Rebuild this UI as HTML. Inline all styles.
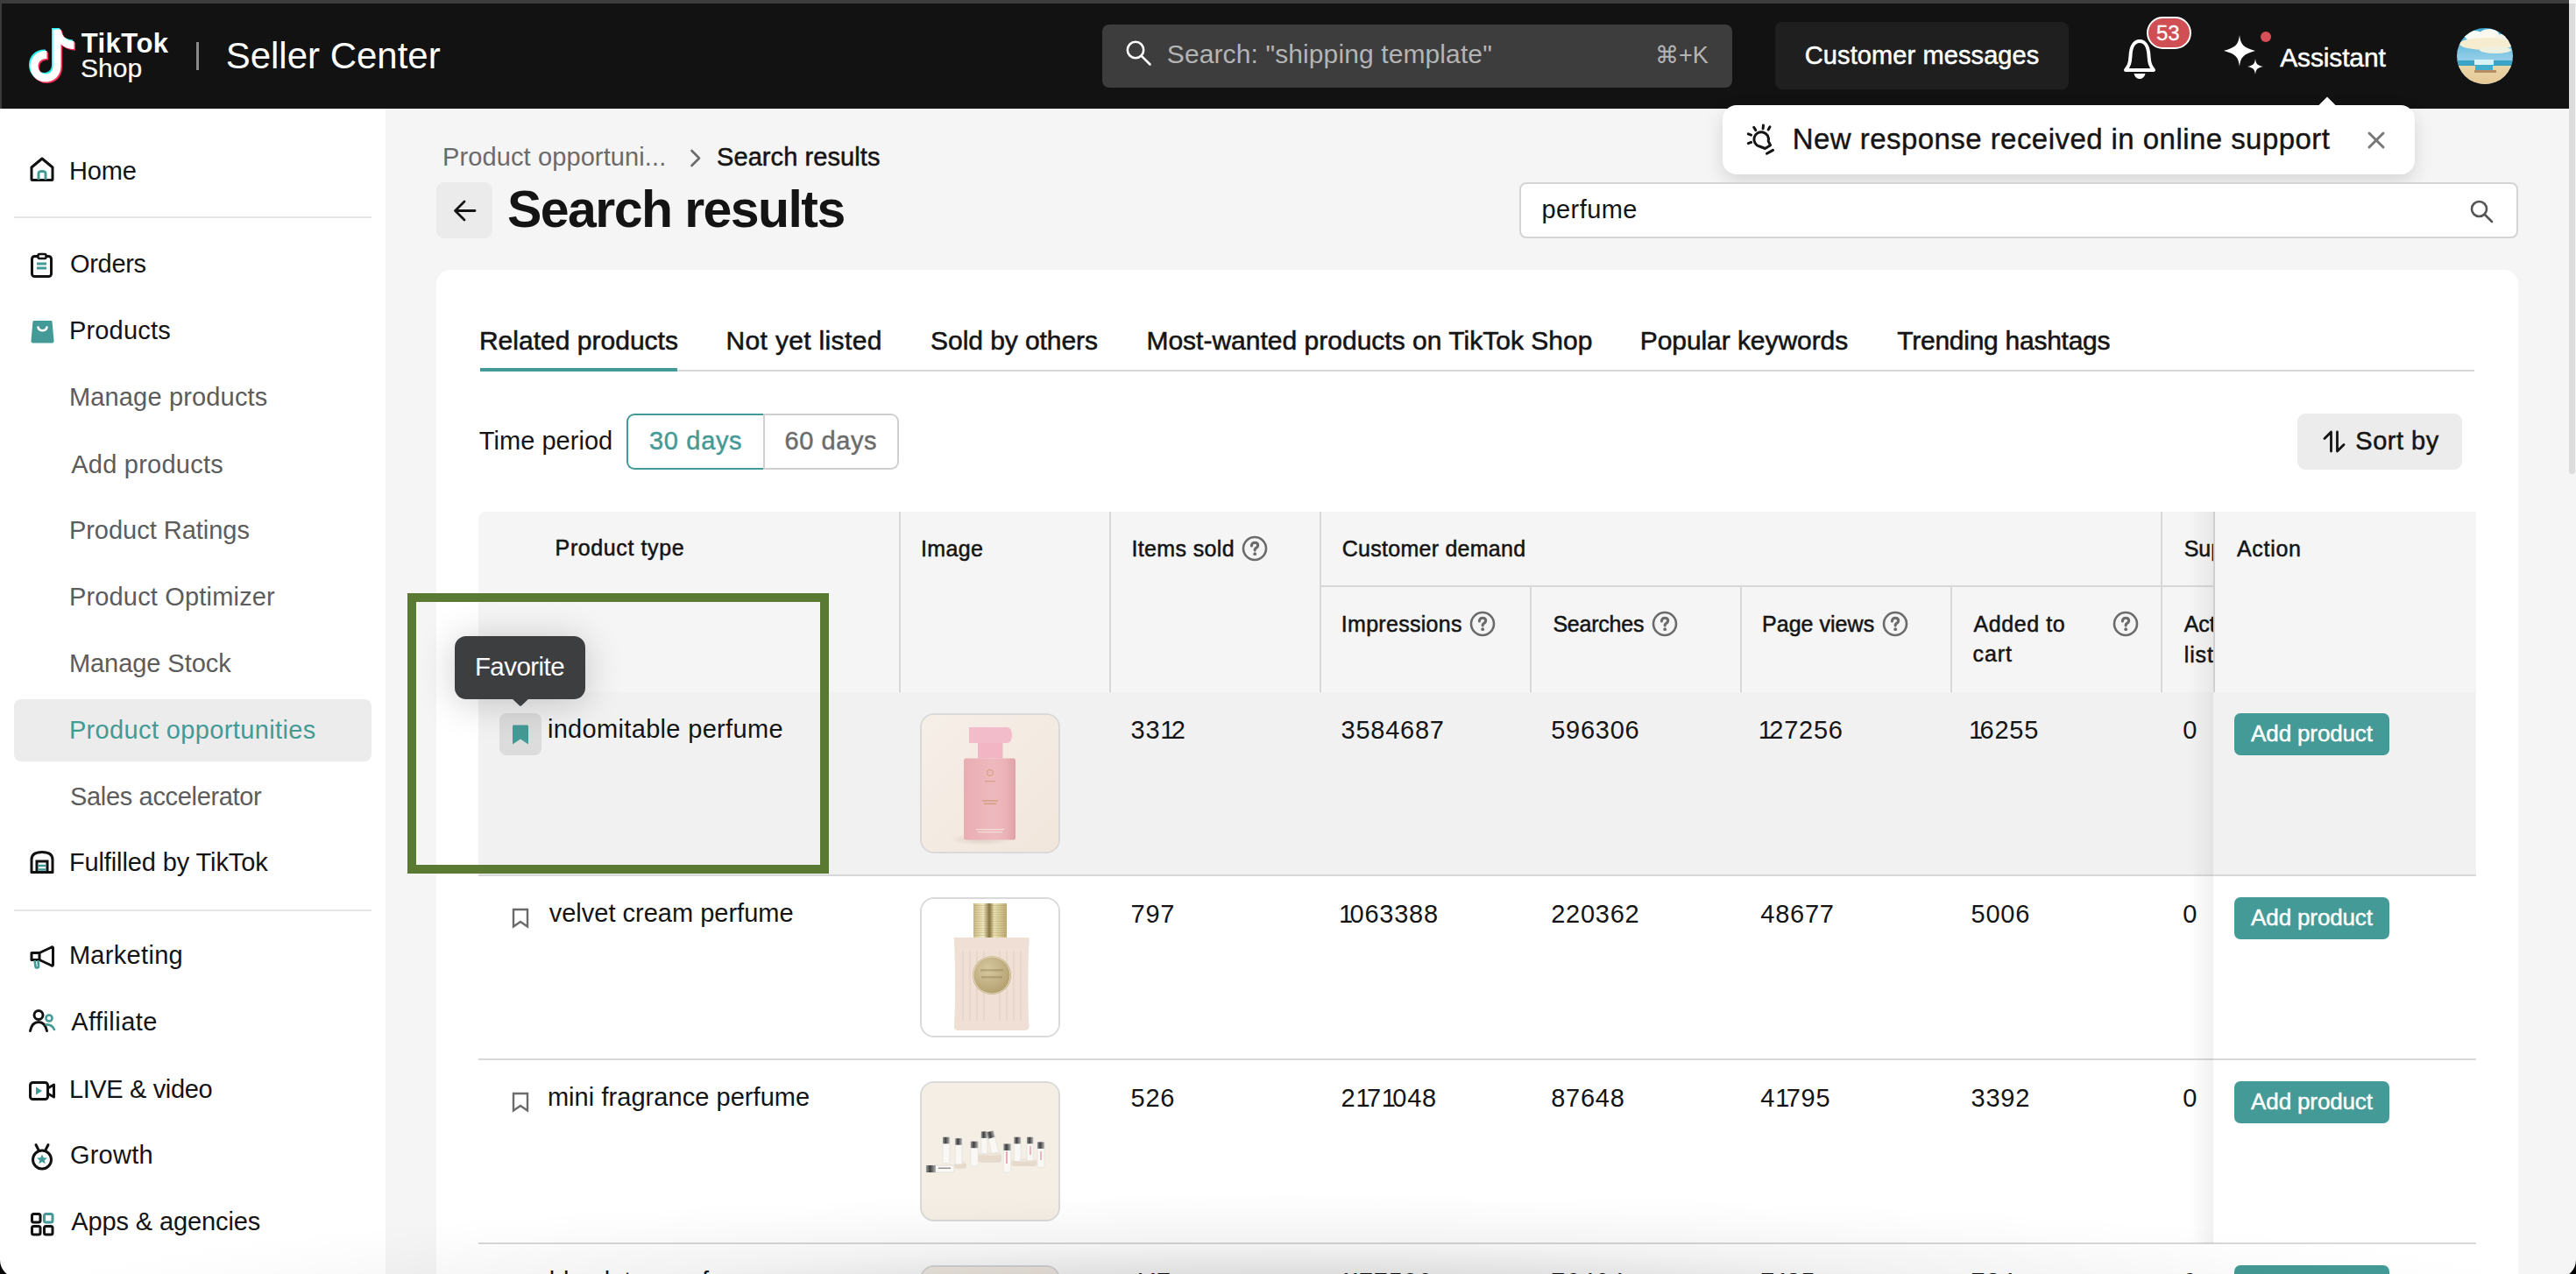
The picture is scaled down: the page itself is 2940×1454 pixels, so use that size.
<!DOCTYPE html>
<html><head><meta charset="utf-8"><title>Seller Center</title>
<style>
html,body{margin:0;padding:0;width:2940px;height:1454px;overflow:hidden;background:#f5f5f5;}
body{position:relative;font-family:"Liberation Sans",sans-serif;}
.t{position:absolute;line-height:0;white-space:nowrap;}
svg{overflow:visible}
</style></head><body>
<div style="position:absolute;left:0px;top:0px;width:2940px;height:4px;background:#3c3c3c"></div><div style="position:absolute;left:0px;top:4px;width:2932px;height:120px;background:#121212"></div><div style="position:absolute;left:0px;top:4px;width:2px;height:120px;background:#3a3a3a"></div><div style="position:absolute;left:0px;top:124px;width:440px;height:1330px;background:#ffffff"></div><div style="position:absolute;left:440px;top:124px;width:2492px;height:1330px;background:#f5f5f5"></div><div style="position:absolute;left:2932px;top:0px;width:8px;height:1454px;background:#f5f5f5"></div><div style="position:absolute;left:2932px;top:4px;width:7px;height:537px;background:#dcdcdc;border-radius:0 0 4px 4px"></div><div style="position:absolute;left:1258px;top:28px;width:719px;height:72px;background:#3d3d3d;border-radius:8px"></div><svg style="position:absolute;left:1285px;top:46px;" width="30" height="30" viewBox="0 0 30 30"><circle cx="11" cy="11" r="9.2" fill="none" stroke="#fff" stroke-width="2.6"/><line x1="17.8" y1="17.8" x2="27.5" y2="27.5" stroke="#fff" stroke-width="2.6" stroke-linecap="round"/></svg><div class="t" style="left:1331.8px;top:62.3px;font-size:30px;color:#b4b4b4;letter-spacing:0.108px;">Search: &quot;shipping template&quot;</div><div class="t" style="left:1889.0px;top:63.3px;font-size:27px;color:#b4b4b4;">⌘+K</div><div style="position:absolute;left:2026px;top:25px;width:335px;height:77px;background:#1f1f1f;border-radius:8px"></div><div class="t" style="left:2059.8px;top:63.3px;font-size:29px;color:#ffffff;-webkit-text-stroke:0.5px #ffffff;letter-spacing:0.1px;">Customer messages</div><svg style="position:absolute;left:2420px;top:44px;" width="44" height="48" viewBox="0 0 44 48"><path d="M6 36 C10 31 11 28 11.5 20 C12 9 16 3 22 3 C28 3 32 9 32.5 20 C33 28 34 31 38 36 Z" fill="none" stroke="#fff" stroke-width="4" stroke-linejoin="round"/><path d="M15.5 40 L28.5 40 C27.5 44 25 46 22 46 C19 46 16.5 44 15.5 40 Z" fill="#fff"/></svg><div style="position:absolute;left:2450px;top:19px;width:51px;height:37px;background:#d04f55;border:2px solid #fff;border-radius:20px;box-sizing:border-box"></div><div class="t" style="left:2461.0px;top:37.6px;font-size:24px;color:#ffffff;-webkit-text-stroke:0.3px #ffffff;">53</div><svg style="position:absolute;left:2536px;top:38px;" width="50" height="50" viewBox="0 0 50 50"><path d="M20 2 C21.5 13 24 16 38 20 C24 24 21.5 27 20 38 C18.5 27 16 24 2 20 C16 16 18.5 13 20 2 Z" fill="#fff"/><path d="M38 29 C38.8 35 40 36.5 47 38 C40 39.5 38.8 41 38 47 C37.2 41 36 39.5 29 38 C36 36.5 37.2 35 38 29 Z" fill="#fff"/></svg><div style="position:absolute;left:2580px;top:36px;width:12px;height:12px;background:#d94f57;border-radius:50%"></div><div class="t" style="left:2602.2px;top:65.5px;font-size:30px;color:#ffffff;-webkit-text-stroke:0.5px #ffffff;letter-spacing:-0.138px;">Assistant</div><svg style="position:absolute;left:2804px;top:32px;" width="64" height="64" viewBox="0 0 64 64"><defs><clipPath id="av"><circle cx="32" cy="32" r="32"/></clipPath>
<linearGradient id="sky" x1="0" y1="0" x2="0" y2="1"><stop offset="0" stop-color="#3aa6d3"/><stop offset="0.5" stop-color="#8ccbe6"/><stop offset="1" stop-color="#b7e2f2"/></linearGradient>
<linearGradient id="sand" x1="0" y1="0" x2="0" y2="1"><stop offset="0" stop-color="#e9d6a8"/><stop offset="1" stop-color="#e6c996"/></linearGradient></defs>
<g clip-path="url(#av)"><rect width="64" height="64" fill="url(#sky)"/>
<ellipse cx="20" cy="9" rx="11" ry="6" fill="#f7fbf4"/><ellipse cx="37" cy="7" rx="11" ry="6" fill="#fbf8f0"/><ellipse cx="52" cy="12" rx="10" ry="5" fill="#f6f3e6"/>
<ellipse cx="34" cy="18" rx="31" ry="7" fill="#f6ecd0"/><ellipse cx="44" cy="25" rx="18" ry="4" fill="#eef0e0"/>
<rect y="37" width="64" height="6" fill="#3aa3c6"/>
<rect y="43" width="64" height="21" fill="url(#sand)"/>
<rect x="20" y="36" width="22" height="6" fill="#d9f2f6"/>
<rect x="21" y="42" width="20" height="6" fill="#43aecb"/>
<rect x="20" y="48" width="25" height="3" fill="#b98d63"/>
</g></svg><div class="t" style="left:257.7px;top:63.7px;font-size:42px;color:#ffffff;letter-spacing:-0.008px;">Seller Center</div><div style="position:absolute;left:224px;top:48px;width:3px;height:32px;background:#8a8a8a"></div><svg style="position:absolute;left:27.5px;top:28px;" width="60" height="68" viewBox="0 0 60 68">
<g transform="translate(2,2)">
<path d="M29 2 L38 2 C39 10 44 15 53 15.5 L53 24.5 C46 24.5 41.5 22 38 19 L38 44 C38 55 30 62 20.5 62 C10 62 3 54 3 44 C3 33.5 11 26 22 26.5 L22 35.5 C16 35 12 39 12 44 C12 49 16 53 20.5 53 C25.5 53 29 49.5 29 44 Z" fill="#25f4ee"/>
</g>
<g transform="translate(5,5)">
<path d="M29 2 L38 2 C39 10 44 15 53 15.5 L53 24.5 C46 24.5 41.5 22 38 19 L38 44 C38 55 30 62 20.5 62 C10 62 3 54 3 44 C3 33.5 11 26 22 26.5 L22 35.5 C16 35 12 39 12 44 C12 49 16 53 20.5 53 C25.5 53 29 49.5 29 44 Z" fill="#fe2c55"/>
</g>
<g transform="translate(3.5,3.5)">
<path d="M29 2 L38 2 C39 10 44 15 53 15.5 L53 24.5 C46 24.5 41.5 22 38 19 L38 44 C38 55 30 62 20.5 62 C10 62 3 54 3 44 C3 33.5 11 26 22 26.5 L22 35.5 C16 35 12 39 12 44 C12 49 16 53 20.5 53 C25.5 53 29 49.5 29 44 Z" fill="#ffffff"/>
</g></svg><div class="t" style="left:92.7px;top:50.1px;font-size:31px;color:#ffffff;letter-spacing:0.46px;font-weight:700">TikTok</div><div class="t" style="left:92.0px;top:77.5px;font-size:30px;color:#ffffff;-webkit-text-stroke:0.2px #ffffff;">Shop</div><div style="position:absolute;left:1966px;top:120px;width:790px;height:79px;background:#fff;border-radius:16px;box-shadow:0 8px 22px rgba(0,0,0,0.13)"></div><svg style="position:absolute;left:2646px;top:110px;" width="20" height="12" viewBox="0 0 20 12"><path d="M0 10.5 L10 0.5 L20 10.5 Z" fill="#fff"/></svg><svg style="position:absolute;left:1993px;top:141px;" width="32" height="37" viewBox="0 0 32 37"><g fill="none" stroke="#141414" stroke-width="3" stroke-linecap="round" stroke-linejoin="round">
<path d="M23.5 34.2 L30.5 30.4"/>
<path d="M15.05 26 A8.3 8.3 0 1 1 25.2 20.15 L27.6 24.8 L21.6 28.5 Z"/>
<path d="M8.7 4.3 L10.8 7.6"/><path d="M19.5 2 L19.1 5.8"/><path d="M27 3.8 L25.2 6.9"/><path d="M2.3 11.9 L5.6 13.1"/><path d="M2.3 22.6 L5.6 21.4"/>
</g></svg><div class="t" style="left:2045.8px;top:159.2px;font-size:33px;color:#141414;-webkit-text-stroke:0.4px #141414;letter-spacing:0.445px;">New response received in online support</div><svg style="position:absolute;left:2702px;top:150px;" width="20" height="20" viewBox="0 0 20 20"><path d="M2 2 L18 18 M18 2 L2 18" stroke="#777" stroke-width="3" stroke-linecap="round"/></svg><div style="position:absolute;left:16px;top:247px;width:408px;height:2px;background:#e6e6e6"></div><div style="position:absolute;left:16px;top:1038px;width:408px;height:2px;background:#e6e6e6"></div><div style="position:absolute;left:16px;top:798px;width:408px;height:71px;background:#ececec;border-radius:8px"></div><div class="t" style="left:78.9px;top:194.7px;font-size:29px;color:#141414;letter-spacing:-0.133px;">Home</div><div class="t" style="left:79.9px;top:301.2px;font-size:29px;color:#141414;letter-spacing:-0.28px;">Orders</div><div class="t" style="left:78.9px;top:377.4px;font-size:29px;color:#141414;letter-spacing:0.2px;">Products</div><div class="t" style="left:78.9px;top:452.8px;font-size:29px;color:#5c5c5c;letter-spacing:0.164px;">Manage products</div><div class="t" style="left:81.2px;top:529.5px;font-size:29px;color:#5c5c5c;letter-spacing:0.245px;">Add products</div><div class="t" style="left:78.9px;top:604.6px;font-size:29px;color:#5c5c5c;letter-spacing:-0.021px;">Product Ratings</div><div class="t" style="left:78.9px;top:680.6px;font-size:29px;color:#5c5c5c;letter-spacing:0.175px;">Product Optimizer</div><div class="t" style="left:78.9px;top:756.9px;font-size:29px;color:#5c5c5c;letter-spacing:-0.055px;">Manage Stock</div><div class="t" style="left:78.9px;top:832.8px;font-size:29px;color:#449a96;letter-spacing:0.365px;">Product opportunities</div><div class="t" style="left:80.0px;top:908.6px;font-size:29px;color:#5c5c5c;letter-spacing:-0.331px;">Sales accelerator</div><div class="t" style="left:78.9px;top:984.1px;font-size:29px;color:#141414;letter-spacing:-0.111px;">Fulfilled by TikTok</div><div class="t" style="left:78.9px;top:1090.1px;font-size:29px;color:#141414;letter-spacing:0.312px;">Marketing</div><div class="t" style="left:81.2px;top:1165.9px;font-size:29px;color:#141414;letter-spacing:0.45px;">Affiliate</div><div class="t" style="left:78.9px;top:1242.8px;font-size:29px;color:#141414;letter-spacing:-0.364px;">LIVE &amp; video</div><div class="t" style="left:79.9px;top:1318.4px;font-size:29px;color:#141414;letter-spacing:0.26px;">Growth</div><div class="t" style="left:81.2px;top:1394.3px;font-size:29px;color:#141414;letter-spacing:-0.107px;">Apps &amp; agencies</div><svg style="position:absolute;left:34px;top:179px;" width="28" height="28" viewBox="0 0 28 28"><path d="M2 12 L14 2 L26 12 L26 25.5 C26 26 25.5 26.5 25 26.5 L3 26.5 C2.5 26.5 2 26 2 25.5 Z" fill="none" stroke="#111" stroke-width="3" stroke-linejoin="round"/><path d="M10 26 L10 19 C10 17 11 16.5 14 16.5 C17 16.5 18 17 18 19 L18 26" fill="none" stroke="#449a96" stroke-width="3"/></svg><svg style="position:absolute;left:35px;top:289px;" width="26" height="28" viewBox="0 0 26 28"><rect x="1.5" y="3.5" width="22" height="23" rx="3" fill="none" stroke="#111" stroke-width="3"/><rect x="8.5" y="1" width="9" height="5" rx="1.5" fill="#fff" stroke="#111" stroke-width="2.5"/><path d="M7 12 L18 12 M7 17 L18 17" stroke="#449a96" stroke-width="2.8"/></svg><svg style="position:absolute;left:35px;top:365px;" width="27" height="27" viewBox="0 0 27 27"><path d="M4 1 L23 1 C24 1 24.5 1.5 24.6 2.5 L26.5 24 C26.6 25.5 25.8 26.5 24.5 26.5 L2.5 26.5 C1.2 26.5 0.4 25.5 0.5 24 L2.4 2.5 C2.5 1.5 3 1 4 1 Z" fill="#449a96"/><path d="M8.5 8.5 C9.5 13.5 17.5 13.5 18.5 8.5" fill="none" stroke="#fff" stroke-width="2.6" stroke-linecap="round"/></svg><svg style="position:absolute;left:34px;top:971px;" width="28" height="26" viewBox="0 0 28 26"><path d="M2 24.5 L2 10 C2 4 7 1.5 14 1.5 C21 1.5 26 4 26 10 L26 24.5 Z" fill="none" stroke="#111" stroke-width="3" stroke-linejoin="round"/><path d="M8 24.5 L8 12 L20 12 L20 24.5" fill="none" stroke="#111" stroke-width="3"/><path d="M9.5 17 L18.5 17 M9.5 21.5 L18.5 21.5" stroke="#449a96" stroke-width="2.6"/></svg><svg style="position:absolute;left:34px;top:1079px;" width="29" height="28" viewBox="0 0 29 28"><path d="M2 8.5 L11 8.5 L25 2 C26 1.6 26.5 2 26.5 3 L26.5 22 C26.5 23 26 23.4 25 23 L11 16.5 L2 16.5 Z" fill="none" stroke="#111" stroke-width="3" stroke-linejoin="round"/><path d="M11 8.5 L11 16.5" stroke="#111" stroke-width="3"/><path d="M5.5 17 L6.5 24 C6.8 26 10 26 10 24 L9.5 17" fill="none" stroke="#449a96" stroke-width="2.6"/></svg><svg style="position:absolute;left:33px;top:1152px;" width="31" height="26" viewBox="0 0 31 26"><circle cx="11" cy="6.5" r="5" fill="none" stroke="#111" stroke-width="3"/><path d="M1.5 24.5 C3 17 7 14.5 11 14.5 C15 14.5 19 17 20.5 24.5" fill="none" stroke="#111" stroke-width="3" stroke-linecap="round"/><circle cx="23" cy="10" r="3.5" fill="none" stroke="#449a96" stroke-width="2.6"/><path d="M19.5 17.5 C23.5 17 27 19 29 23" fill="none" stroke="#449a96" stroke-width="2.6" stroke-linecap="round"/></svg><svg style="position:absolute;left:33px;top:1234px;" width="31" height="22" viewBox="0 0 31 22"><rect x="1.5" y="1.5" width="20" height="19" rx="3" fill="none" stroke="#111" stroke-width="3"/><path d="M21.5 8 L28.5 4 L28.5 18 L21.5 14" fill="none" stroke="#111" stroke-width="3" stroke-linejoin="round"/><path d="M8 6.5 L15 11 L8 15.5 Z" fill="#449a96"/></svg><svg style="position:absolute;left:36px;top:1305px;" width="25" height="31" viewBox="0 0 25 31"><circle cx="12" cy="18.5" r="10.5" fill="none" stroke="#111" stroke-width="3"/><path d="M5 1.5 L8.5 8.5 M19 1.5 L15.5 8.5" stroke="#111" stroke-width="3" stroke-linecap="round"/><path d="M12 12.5 L13.8 16.3 L17.8 16.6 L14.8 19.2 L15.8 23.2 L12 21 L8.2 23.2 L9.2 19.2 L6.2 16.6 L10.2 16.3 Z" fill="#449a96"/></svg><svg style="position:absolute;left:35px;top:1384px;" width="27" height="27" viewBox="0 0 27 27"><rect x="1.5" y="1.5" width="9.5" height="9.5" rx="2" fill="none" stroke="#111" stroke-width="3"/><rect x="15.5" y="1.5" width="9.5" height="9.5" rx="2" fill="none" stroke="#449a96" stroke-width="3"/><rect x="1.5" y="15.5" width="9.5" height="9.5" rx="2" fill="none" stroke="#111" stroke-width="3"/><rect x="15.5" y="15.5" width="9.5" height="9.5" rx="2" fill="none" stroke="#111" stroke-width="3"/></svg><div class="t" style="left:505.1px;top:179.2px;font-size:29px;color:#6b6b6b;letter-spacing:0.105px;">Product opportuni...</div><svg style="position:absolute;left:787px;top:170px;" width="14" height="21" viewBox="0 0 14 21"><path d="M2.5 2 L11 10.5 L2.5 19" fill="none" stroke="#6b6b6b" stroke-width="2.6" stroke-linecap="round" stroke-linejoin="round"/></svg><div class="t" style="left:818.0px;top:179.2px;font-size:29px;color:#141414;-webkit-text-stroke:0.5px #141414;letter-spacing:0.085px;">Search results</div><div style="position:absolute;left:498px;top:208px;width:64px;height:64px;background:#ebebeb;border-radius:9px"></div><svg style="position:absolute;left:517px;top:227px;" width="27" height="27" viewBox="0 0 27 27"><path d="M25 13.5 L3 13.5 M13 3 L2.5 13.5 L13 24" fill="none" stroke="#141414" stroke-width="2.8" stroke-linecap="round" stroke-linejoin="round"/></svg><div class="t" style="left:579.1px;top:238.7px;font-size:59px;color:#141414;letter-spacing:-1.577px;font-weight:700">Search results</div><div style="position:absolute;left:1734px;top:208px;width:1140px;height:64px;background:#fff;border:2px solid #d2d4d6;border-radius:8px;box-sizing:border-box"></div><div class="t" style="left:1759.4px;top:238.7px;font-size:29px;color:#141414;letter-spacing:0.45px;">perfume</div><svg style="position:absolute;left:2819px;top:228px;" width="28" height="26" viewBox="0 0 28 26"><circle cx="10.5" cy="10.5" r="8.5" fill="none" stroke="#555" stroke-width="2.6"/><line x1="17" y1="17" x2="25" y2="25" stroke="#555" stroke-width="2.6" stroke-linecap="round"/></svg><div style="position:absolute;left:498px;top:308px;width:2376px;height:1200px;background:#fff;border-radius:16px"></div><div style="position:absolute;left:548px;top:422px;width:2276px;height:2px;background:#d8d8d8"></div><div style="position:absolute;left:548px;top:420px;width:225px;height:4px;background:#449a96"></div><div class="t" style="left:546.9px;top:388.8px;font-size:30px;color:#141414;-webkit-text-stroke:0.55px #141414;letter-spacing:0.017px;">Related products</div><div class="t" style="left:828.5px;top:388.8px;font-size:30px;color:#141414;-webkit-text-stroke:0.55px #141414;letter-spacing:0.342px;">Not yet listed</div><div class="t" style="left:1062.1px;top:388.8px;font-size:30px;color:#141414;-webkit-text-stroke:0.55px #141414;letter-spacing:-0.065px;">Sold by others</div><div class="t" style="left:1308.4px;top:388.8px;font-size:30px;color:#141414;-webkit-text-stroke:0.55px #141414;letter-spacing:0.01px;">Most-wanted products on TikTok Shop</div><div class="t" style="left:1871.7px;top:388.8px;font-size:30px;color:#141414;-webkit-text-stroke:0.55px #141414;letter-spacing:-0.063px;">Popular keywords</div><div class="t" style="left:2165.3px;top:388.8px;font-size:30px;color:#141414;-webkit-text-stroke:0.55px #141414;letter-spacing:-0.259px;">Trending hashtags</div><div class="t" style="left:546.8px;top:502.6px;font-size:29px;color:#141414;letter-spacing:0.04px;">Time period</div><div style="position:absolute;left:871px;top:472px;width:155px;height:64px;background:#fff;border:2px solid #cfcfcf;border-left:none;border-radius:0 9px 9px 0;box-sizing:border-box"></div><div style="position:absolute;left:871px;top:472px;width:2px;height:64px;background:#cfcfcf"></div><div style="position:absolute;left:715px;top:472px;width:156px;height:64px;background:#fff;border:2px solid #449a96;border-right:none;border-radius:9px 0 0 9px;box-sizing:border-box"></div><div class="t" style="left:741.0px;top:502.6px;font-size:29px;color:#449a96;-webkit-text-stroke:0.45px #449a96;letter-spacing:0.675px;">30 days</div><div class="t" style="left:895.5px;top:502.6px;font-size:29px;color:#6b6b6b;-webkit-text-stroke:0.45px #6b6b6b;letter-spacing:0.575px;">60 days</div><div style="position:absolute;left:2622px;top:472px;width:188px;height:64px;background:#ececec;border-radius:9px"></div><svg style="position:absolute;left:2650px;top:490px;" width="28" height="28" viewBox="0 0 28 28"><g fill="none" stroke="#141414" stroke-width="2.8" stroke-linecap="round" stroke-linejoin="round"><path d="M10.5 25 L10.5 3 L3 10.5"/><path d="M17.5 3 L17.5 25 L25 17.5"/></g></svg><div class="t" style="left:2688.3px;top:503.1px;font-size:29px;color:#141414;-webkit-text-stroke:0.5px #141414;letter-spacing:0.5px;">Sort by</div><div style="position:absolute;left:546px;top:583.7px;width:2280px;height:206.3px;background:#f5f5f5;border-radius:8px 0 0 0"></div><div style="position:absolute;left:546px;top:790px;width:2280px;height:208px;background:#f1f1f1"></div><div style="position:absolute;left:546px;top:998px;width:2280px;height:2px;background:#d7d8da"></div><div style="position:absolute;left:546px;top:1208px;width:2280px;height:2px;background:#d7d8da"></div><div style="position:absolute;left:546px;top:1418px;width:2280px;height:2px;background:#d7d8da"></div><div style="position:absolute;left:1026px;top:583.7px;width:2px;height:206.3px;background:#d7d8da"></div><div style="position:absolute;left:1265.5px;top:583.7px;width:2px;height:206.3px;background:#d7d8da"></div><div style="position:absolute;left:1506px;top:583.7px;width:2px;height:206.3px;background:#d7d8da"></div><div style="position:absolute;left:2466px;top:583.7px;width:2px;height:206.3px;background:#d7d8da"></div><div style="position:absolute;left:1746px;top:668px;width:2px;height:122px;background:#d7d8da"></div><div style="position:absolute;left:1986px;top:668px;width:2px;height:122px;background:#d7d8da"></div><div style="position:absolute;left:2226px;top:668px;width:2px;height:122px;background:#d7d8da"></div><div style="position:absolute;left:1506px;top:668px;width:1020px;height:2px;background:#d7d8da"></div><div class="t" style="left:633.6px;top:625.0px;font-size:25px;color:#141414;-webkit-text-stroke:0.5px #141414;letter-spacing:0.609px;">Product type</div><div class="t" style="left:1051.0px;top:625.5px;font-size:25px;color:#141414;-webkit-text-stroke:0.5px #141414;letter-spacing:0.35px;">Image</div><div class="t" style="left:1291.5px;top:625.5px;font-size:25px;color:#141414;-webkit-text-stroke:0.5px #141414;letter-spacing:0.356px;">Items sold</div><svg style="position:absolute;left:1417px;top:610.9px;" width="30" height="30" viewBox="0 0 30 30"><circle cx="15" cy="15" r="13" fill="none" stroke="#6b6b6b" stroke-width="2.6"/><path d="M11.4 11.9 C11.4 9.6 13.1 8.3 15.1 8.3 C17.2 8.3 18.7 9.6 18.7 11.5 C18.7 13.6 16.2 14.2 15.3 15.7 L15.2 16.9" fill="none" stroke="#6b6b6b" stroke-width="3.1" stroke-linecap="round"/><circle cx="15.2" cy="21.2" r="1.9" fill="#6b6b6b"/></svg><div class="t" style="left:1531.8px;top:625.5px;font-size:25px;color:#141414;-webkit-text-stroke:0.5px #141414;letter-spacing:0.257px;">Customer demand</div><div class="t" style="left:2492.7px;top:625.5px;font-size:25px;color:#141414;-webkit-text-stroke:0.5px #141414;">Supply</div><div class="t" style="left:1530.8px;top:711.9px;font-size:25px;color:#141414;-webkit-text-stroke:0.5px #141414;letter-spacing:0.29px;">Impressions</div><svg style="position:absolute;left:1677.2px;top:696.7px;" width="30" height="30" viewBox="0 0 30 30"><circle cx="15" cy="15" r="13" fill="none" stroke="#6b6b6b" stroke-width="2.6"/><path d="M11.4 11.9 C11.4 9.6 13.1 8.3 15.1 8.3 C17.2 8.3 18.7 9.6 18.7 11.5 C18.7 13.6 16.2 14.2 15.3 15.7 L15.2 16.9" fill="none" stroke="#6b6b6b" stroke-width="3.1" stroke-linecap="round"/><circle cx="15.2" cy="21.2" r="1.9" fill="#6b6b6b"/></svg><div class="t" style="left:1772.4px;top:711.9px;font-size:25px;color:#141414;-webkit-text-stroke:0.5px #141414;letter-spacing:-0.229px;">Searches</div><svg style="position:absolute;left:1885.2px;top:696.7px;" width="30" height="30" viewBox="0 0 30 30"><circle cx="15" cy="15" r="13" fill="none" stroke="#6b6b6b" stroke-width="2.6"/><path d="M11.4 11.9 C11.4 9.6 13.1 8.3 15.1 8.3 C17.2 8.3 18.7 9.6 18.7 11.5 C18.7 13.6 16.2 14.2 15.3 15.7 L15.2 16.9" fill="none" stroke="#6b6b6b" stroke-width="3.1" stroke-linecap="round"/><circle cx="15.2" cy="21.2" r="1.9" fill="#6b6b6b"/></svg><div class="t" style="left:2011.0px;top:711.9px;font-size:25px;color:#141414;-webkit-text-stroke:0.5px #141414;letter-spacing:0.033px;">Page views</div><svg style="position:absolute;left:2147.8px;top:696.7px;" width="30" height="30" viewBox="0 0 30 30"><circle cx="15" cy="15" r="13" fill="none" stroke="#6b6b6b" stroke-width="2.6"/><path d="M11.4 11.9 C11.4 9.6 13.1 8.3 15.1 8.3 C17.2 8.3 18.7 9.6 18.7 11.5 C18.7 13.6 16.2 14.2 15.3 15.7 L15.2 16.9" fill="none" stroke="#6b6b6b" stroke-width="3.1" stroke-linecap="round"/><circle cx="15.2" cy="21.2" r="1.9" fill="#6b6b6b"/></svg><div class="t" style="left:2252.6px;top:711.9px;font-size:25px;color:#141414;-webkit-text-stroke:0.5px #141414;letter-spacing:0.557px;">Added to</div><svg style="position:absolute;left:2410.8px;top:696.7px;" width="30" height="30" viewBox="0 0 30 30"><circle cx="15" cy="15" r="13" fill="none" stroke="#6b6b6b" stroke-width="2.6"/><path d="M11.4 11.9 C11.4 9.6 13.1 8.3 15.1 8.3 C17.2 8.3 18.7 9.6 18.7 11.5 C18.7 13.6 16.2 14.2 15.3 15.7 L15.2 16.9" fill="none" stroke="#6b6b6b" stroke-width="3.1" stroke-linecap="round"/><circle cx="15.2" cy="21.2" r="1.9" fill="#6b6b6b"/></svg><div class="t" style="left:2251.6px;top:746.4px;font-size:25px;color:#141414;-webkit-text-stroke:0.5px #141414;letter-spacing:0.867px;">cart</div><div class="t" style="left:2492.7px;top:711.9px;font-size:25px;color:#141414;-webkit-text-stroke:0.5px #141414;">Active</div><div class="t" style="left:2492.7px;top:746.8px;font-size:25px;color:#141414;-webkit-text-stroke:0.5px #141414;letter-spacing:0.9px;">listings</div><div class="t" style="left:624.9px;top:832.1px;font-size:29px;color:#141414;letter-spacing:0.328px;">indomitable perfume</div><div class="t" style="left:1290.5px;top:833.1px;font-size:29px;color:#141414;letter-spacing:0.75px">33<span style="letter-spacing:-3.6px">1</span>2</div><div class="t" style="left:1530.5px;top:833.1px;font-size:29px;color:#141414;letter-spacing:0.75px">3584687</div><div class="t" style="left:1770.2px;top:833.1px;font-size:29px;color:#141414;letter-spacing:0.75px">596306</div><div class="t" style="left:2006.8px;top:833.1px;font-size:29px;color:#141414;letter-spacing:0.75px"><span style="letter-spacing:-3.6px">1</span>27256</div><div class="t" style="left:2247.0px;top:833.1px;font-size:29px;color:#141414;letter-spacing:0.75px"><span style="letter-spacing:-3.6px">1</span>6255</div><div class="t" style="left:2491.2px;top:833.1px;font-size:29px;color:#141414;letter-spacing:0.75px">0</div><div style="position:absolute;left:570px;top:814px;width:48px;height:48px;background:#dcdcdc;border-radius:8px"></div><svg style="position:absolute;left:584px;top:826px;" width="20" height="24" viewBox="0 0 20 24"><path d="M2.5 1.5 L17.5 1.5 C18.3 1.5 19 2.2 19 3 L19 23.5 L10 17.5 L1 23.5 L1 3 C1 2.2 1.7 1.5 2.5 1.5 Z" fill="#449a96"/></svg><div class="t" style="left:626.7px;top:1042.1px;font-size:29px;color:#141414;letter-spacing:0.005px;">velvet cream perfume</div><div class="t" style="left:1290.5px;top:1043.1px;font-size:29px;color:#141414;letter-spacing:0.75px">797</div><div class="t" style="left:1528.0px;top:1043.1px;font-size:29px;color:#141414;letter-spacing:0.75px"><span style="letter-spacing:-3.6px">1</span>063388</div><div class="t" style="left:1770.2px;top:1043.1px;font-size:29px;color:#141414;letter-spacing:0.75px">220362</div><div class="t" style="left:2009.3px;top:1043.1px;font-size:29px;color:#141414;letter-spacing:0.75px">48677</div><div class="t" style="left:2249.5px;top:1043.1px;font-size:29px;color:#141414;letter-spacing:0.75px">5006</div><div class="t" style="left:2491.2px;top:1043.1px;font-size:29px;color:#141414;letter-spacing:0.75px">0</div><svg style="position:absolute;left:584px;top:1036px;" width="20" height="24" viewBox="0 0 20 24"><path d="M2 2 L18 2 L18 21.5 L10 16 L2 21.5 Z" fill="none" stroke="#6b6b6b" stroke-width="2.4" stroke-linejoin="miter"/></svg><div class="t" style="left:624.9px;top:1252.1px;font-size:29px;color:#141414;letter-spacing:0.052px;">mini fragrance perfume</div><div class="t" style="left:1290.5px;top:1253.1px;font-size:29px;color:#141414;letter-spacing:0.75px">526</div><div class="t" style="left:1530.5px;top:1253.1px;font-size:29px;color:#141414;letter-spacing:0.75px">2<span style="letter-spacing:-3.6px">1</span>7<span style="letter-spacing:-3.6px">1</span>048</div><div class="t" style="left:1770.2px;top:1253.1px;font-size:29px;color:#141414;letter-spacing:0.75px">87648</div><div class="t" style="left:2009.3px;top:1253.1px;font-size:29px;color:#141414;letter-spacing:0.75px">4<span style="letter-spacing:-3.6px">1</span>795</div><div class="t" style="left:2249.5px;top:1253.1px;font-size:29px;color:#141414;letter-spacing:0.75px">3392</div><div class="t" style="left:2491.2px;top:1253.1px;font-size:29px;color:#141414;letter-spacing:0.75px">0</div><svg style="position:absolute;left:584px;top:1246px;" width="20" height="24" viewBox="0 0 20 24"><path d="M2 2 L18 2 L18 21.5 L10 16 L2 21.5 Z" fill="none" stroke="#6b6b6b" stroke-width="2.4" stroke-linejoin="miter"/></svg><div class="t" style="left:626.8px;top:1462.1px;font-size:29px;color:#141414;">blue lotus perfume</div><div class="t" style="left:1290.5px;top:1463.1px;font-size:29px;color:#141414;letter-spacing:0.75px">4<span style="letter-spacing:-3.6px">1</span>7</div><div class="t" style="left:1528.0px;top:1463.1px;font-size:29px;color:#141414;letter-spacing:0.75px"><span style="letter-spacing:-3.6px">1</span><span style="letter-spacing:-3.6px">1</span>77590</div><div class="t" style="left:1770.2px;top:1463.1px;font-size:29px;color:#141414;letter-spacing:0.75px">76404</div><div class="t" style="left:2009.3px;top:1463.1px;font-size:29px;color:#141414;letter-spacing:0.75px">7<span style="letter-spacing:-3.6px">1</span>85</div><div class="t" style="left:2249.5px;top:1463.1px;font-size:29px;color:#141414;letter-spacing:0.75px">784</div><div class="t" style="left:2491.2px;top:1463.1px;font-size:29px;color:#141414;letter-spacing:0.75px">0</div><svg style="position:absolute;left:584px;top:1456px;" width="20" height="24" viewBox="0 0 20 24"><path d="M2 2 L18 2 L18 21.5 L10 16 L2 21.5 Z" fill="none" stroke="#6b6b6b" stroke-width="2.4" stroke-linejoin="miter"/></svg><div style="position:absolute;left:2498px;top:583.7px;width:28px;height:835.3px;background:linear-gradient(to right, rgba(0,0,0,0), rgba(0,0,0,0.055))"></div><div style="position:absolute;left:2526px;top:583.7px;width:300px;height:206.3px;background:#f5f5f5"></div><div style="position:absolute;left:2526px;top:583.7px;width:2px;height:206.3px;background:#cfcfcf"></div><div style="position:absolute;left:2526px;top:790px;width:300px;height:208px;background:#f1f1f1"></div><div style="position:absolute;left:2526px;top:999px;width:300px;height:419px;background:#fff"></div><div style="position:absolute;left:2526px;top:998px;width:300px;height:2px;background:#d7d8da"></div><div style="position:absolute;left:2526px;top:1208px;width:300px;height:2px;background:#d7d8da"></div><div style="position:absolute;left:2526px;top:1418px;width:300px;height:2px;background:#d7d8da"></div><div style="position:absolute;left:2526px;top:1420px;width:300px;height:40px;background:#fff"></div><div class="t" style="left:2553.0px;top:625.5px;font-size:25px;color:#141414;-webkit-text-stroke:0.5px #141414;letter-spacing:0.68px;">Action</div><div style="position:absolute;left:2550px;top:814px;width:177px;height:48px;background:#449a96;border-radius:7px"></div><div class="t" style="left:2569.1px;top:837.2px;font-size:26px;color:#ffffff;-webkit-text-stroke:0.45px #ffffff;letter-spacing:-0.135px;">Add product</div><div style="position:absolute;left:2550px;top:1024px;width:177px;height:48px;background:#449a96;border-radius:7px"></div><div class="t" style="left:2569.1px;top:1047.2px;font-size:26px;color:#ffffff;-webkit-text-stroke:0.45px #ffffff;letter-spacing:-0.135px;">Add product</div><div style="position:absolute;left:2550px;top:1234px;width:177px;height:48px;background:#449a96;border-radius:7px"></div><div class="t" style="left:2569.1px;top:1257.2px;font-size:26px;color:#ffffff;-webkit-text-stroke:0.45px #ffffff;letter-spacing:-0.135px;">Add product</div><div style="position:absolute;left:2550px;top:1444px;width:177px;height:48px;background:#449a96;border-radius:7px"></div><div class="t" style="left:2569.1px;top:1467.2px;font-size:26px;color:#ffffff;-webkit-text-stroke:0.45px #ffffff;letter-spacing:-0.135px;">Add product</div><div style="position:absolute;left:1050px;top:814px;width:160px;height:160px;box-sizing:border-box;border:2px solid #d9d9d9;border-radius:16px;overflow:hidden;background:#f3ebe2"><svg width="156" height="156" viewBox="0 0 156 156" style="position:absolute;left:0;top:0">
<defs><linearGradient id="pb" x1="0" y1="0" x2="1" y2="0"><stop offset="0" stop-color="#e8adb2"/><stop offset="0.55" stop-color="#eeb9be"/><stop offset="0.8" stop-color="#ebb3b8"/><stop offset="1" stop-color="#dfa2a8"/></linearGradient>
<linearGradient id="pbg" x1="0" y1="0" x2="1" y2="1"><stop offset="0" stop-color="#f6efe8"/><stop offset="1" stop-color="#f1e6dc"/></linearGradient>
<radialGradient id="psh" cx="0.5" cy="0.5" r="0.5"><stop offset="0" stop-color="#d9c9bd" stop-opacity="0.8"/><stop offset="1" stop-color="#d9c9bd" stop-opacity="0"/></radialGradient></defs>
<rect width="156" height="156" fill="url(#pbg)"/>
<ellipse cx="68" cy="142" rx="36" ry="7" fill="url(#psh)"/>
<path d="M54 14 L97 14 C101 14 103 18 103 23 C103 28 101 32 97 32 L54 32 Z" fill="#f3bccb"/>
<rect x="64" y="32" width="28.5" height="17.5" fill="#f1b5c4"/>
<rect x="48" y="49.5" width="59" height="93" rx="2.5" fill="url(#pb)"/>
<circle cx="78" cy="66" r="3.5" fill="none" stroke="#c9996a" stroke-width="0.9"/>
<rect x="72" y="75" width="12" height="1.2" fill="#c9996a" opacity="0.7"/>
<rect x="69" y="97" width="18" height="1.6" fill="#c9996a" opacity="0.7"/><rect x="71" y="100.5" width="14" height="1.6" fill="#c9996a" opacity="0.7"/>
<rect x="62" y="130" width="32" height="1.3" fill="#f7e6e0" opacity="0.8"/><rect x="64" y="133" width="28" height="1.3" fill="#f7e6e0" opacity="0.8"/>
</svg></div><div style="position:absolute;left:1050px;top:1024px;width:160px;height:160px;box-sizing:border-box;border:2px solid #d9d9d9;border-radius:16px;overflow:hidden;background:#ffffff"><svg width="156" height="156" viewBox="0 0 156 156" style="position:absolute;left:0;top:0">
<defs><linearGradient id="gc" x1="0" y1="0" x2="1" y2="0"><stop offset="0" stop-color="#cdbb84"/><stop offset="0.3" stop-color="#f4ebc4"/><stop offset="0.48" stop-color="#85743f"/><stop offset="0.62" stop-color="#efe3b5"/><stop offset="1" stop-color="#bfac72"/></linearGradient>
<radialGradient id="gm" cx="0.4" cy="0.35" r="0.7"><stop offset="0" stop-color="#d8c9a0"/><stop offset="1" stop-color="#b09d6c"/></radialGradient></defs>
<rect width="156" height="156" fill="#ffffff"/>
<rect x="59" y="5" width="38" height="39" fill="url(#gc)"/><rect x="59" y="7.0" width="38" height="0.8" fill="#8a7a48" opacity="0.35"/><rect x="59" y="9.6" width="38" height="0.8" fill="#8a7a48" opacity="0.35"/><rect x="59" y="12.2" width="38" height="0.8" fill="#8a7a48" opacity="0.35"/><rect x="59" y="14.8" width="38" height="0.8" fill="#8a7a48" opacity="0.35"/><rect x="59" y="17.4" width="38" height="0.8" fill="#8a7a48" opacity="0.35"/><rect x="59" y="20.0" width="38" height="0.8" fill="#8a7a48" opacity="0.35"/><rect x="59" y="22.6" width="38" height="0.8" fill="#8a7a48" opacity="0.35"/><rect x="59" y="25.2" width="38" height="0.8" fill="#8a7a48" opacity="0.35"/><rect x="59" y="27.8" width="38" height="0.8" fill="#8a7a48" opacity="0.35"/><rect x="59" y="30.4" width="38" height="0.8" fill="#8a7a48" opacity="0.35"/><rect x="59" y="33.0" width="38" height="0.8" fill="#8a7a48" opacity="0.35"/><rect x="59" y="35.6" width="38" height="0.8" fill="#8a7a48" opacity="0.35"/><rect x="59" y="38.2" width="38" height="0.8" fill="#8a7a48" opacity="0.35"/><rect x="59" y="40.8" width="38" height="0.8" fill="#8a7a48" opacity="0.35"/>
<path d="M36 44 L122 44 C122.5 46 123 47 122.5 48 C121 80 121 115 122.5 146 C122.5 149 120 150 117 150 L42 150 C39 150 37 149 37 146 C38.5 115 38.5 80 37 48 C37 47 37 46 37 46 Z" fill="#efdfd5"/>
<g stroke="#e3cfc2" stroke-width="1">
<line x1="47" y1="60" x2="47" y2="140"/><line x1="55" y1="60" x2="55" y2="140"/><line x1="63" y1="60" x2="63" y2="140"/><line x1="71" y1="60" x2="71" y2="140"/><line x1="89" y1="60" x2="89" y2="140"/><line x1="97" y1="60" x2="97" y2="140"/><line x1="105" y1="60" x2="105" y2="140"/><line x1="113" y1="60" x2="113" y2="140"/></g>
<circle cx="80" cy="87" r="22" fill="url(#gm)"/>
<circle cx="80" cy="87" r="21" fill="none" stroke="#e9dcc0" stroke-width="1"/><rect x="67" y="80" width="26" height="2.5" fill="#7d6f4a" opacity="0.35"/><rect x="68" y="88" width="24" height="2.5" fill="#7d6f4a" opacity="0.35"/>
</svg></div><div style="position:absolute;left:1050px;top:1234px;width:160px;height:160px;box-sizing:border-box;border:2px solid #d9d9d9;border-radius:16px;overflow:hidden;background:#f4eee5"><svg width="156" height="156" viewBox="0 0 156 156" style="position:absolute;left:0;top:0"><defs><linearGradient id="cap" x1="0" y1="0" x2="1" y2="0"><stop offset="0" stop-color="#9a9a9a"/><stop offset="0.4" stop-color="#3e3e3e"/><stop offset="1" stop-color="#b5b5b5"/></linearGradient></defs><rect width="156" height="156" fill="#f4eee5"/><rect x="64.3" y="80.8" width="26.8" height="10" rx="3" fill="#e5dacb"/><ellipse cx="77.7" cy="80.8" rx="13.4" ry="2" fill="#eee6da"/><rect x="102.4" y="87.9" width="29" height="7" rx="3" fill="#e5dacb"/><ellipse cx="116.9" cy="87.9" rx="14.5" ry="2" fill="#eee6da"/><rect x="37.4" y="90.7" width="13.5" height="7" rx="3" fill="#e5dacb"/><ellipse cx="44.15" cy="90.7" rx="6.75" ry="2" fill="#eee6da"/><rect x="24" y="61.8" width="7.8" height="29.6" rx="1" fill="#f9f8f5" stroke="#dcd8d0" stroke-width="0.5"/><rect x="24" y="61.8" width="7.8" height="7.5" fill="url(#cap)"/><rect x="38.2" y="63.2" width="7.7" height="29.6" rx="1" fill="#f9f8f5" stroke="#dcd8d0" stroke-width="0.5"/><rect x="38.2" y="63.2" width="7.7" height="7.5" fill="url(#cap)"/><rect x="55.8" y="66.7" width="8.5" height="28.3" rx="1" fill="#f9f8f5" stroke="#dcd8d0" stroke-width="0.5"/><rect x="55.8" y="66.7" width="8.5" height="7.5" fill="url(#cap)"/><rect x="67.8" y="55.4" width="7.1" height="25.4" rx="1" fill="#f9f8f5" stroke="#dcd8d0" stroke-width="0.5"/><rect x="67.8" y="55.4" width="7.1" height="7.5" fill="url(#cap)"/><rect x="93.3" y="69.5" width="8.4" height="32.5" rx="1" fill="#f9f8f5" stroke="#dcd8d0" stroke-width="0.5"/><rect x="93.3" y="69.5" width="8.4" height="7.5" fill="url(#cap)"/><rect x="105.3" y="61.8" width="7.7" height="27.5" rx="1" fill="#f9f8f5" stroke="#dcd8d0" stroke-width="0.5"/><rect x="105.3" y="61.8" width="7.7" height="7.5" fill="url(#cap)"/><rect x="120" y="61.8" width="7.2" height="26.8" rx="1" fill="#f9f8f5" stroke="#dcd8d0" stroke-width="0.5"/><rect x="120" y="61.8" width="7.2" height="7.5" fill="url(#cap)"/><rect x="132" y="67.4" width="7.9" height="29.0" rx="1" fill="#f9f8f5" stroke="#dcd8d0" stroke-width="0.5"/><rect x="132" y="67.4" width="7.9" height="7.5" fill="url(#cap)"/><g transform="rotate(-14 81 68)"><rect x="77" y="55" width="8" height="25" rx="1" fill="#f9f8f5" stroke="#dcd8d0" stroke-width="0.5"/><rect x="77" y="55" width="8" height="7.5" fill="url(#cap)"/></g><rect x="5" y="94" width="32" height="8" rx="1" fill="#f9f8f5" stroke="#d0ccc4" stroke-width="0.5"/><rect x="5" y="94" width="11" height="8" fill="url(#cap)"/><rect x="19" y="96.5" width="14" height="1.5" fill="#555" opacity="0.6"/><rect x="96" y="78" width="2" height="14" fill="#e38a9a" opacity="0.7"/><rect x="123" y="72" width="2" height="10" fill="#e38a9a" opacity="0.6"/><rect x="135" y="78" width="2" height="10" fill="#e38a9a" opacity="0.6"/></svg></div><div style="position:absolute;left:1050px;top:1444px;width:160px;height:160px;box-sizing:border-box;border:2px solid #d9d9d9;border-radius:16px;overflow:hidden;background:#f4eee6"><svg width="156" height="156" viewBox="0 0 156 156" style="position:absolute;left:0;top:0"><rect width="156" height="156" fill="#f4eee6"/></svg></div><div style="position:absolute;left:519px;top:726px;width:149px;height:72px;background:#3d3e40;border-radius:13px;box-shadow:0 4px 44px rgba(0,0,0,0.2)"></div><svg style="position:absolute;left:583px;top:796px;" width="22" height="11" viewBox="0 0 22 11"><path d="M0 0 L22 0 L12.2 9.3 C11.5 10 10.5 10 9.8 9.3 Z" fill="#3d3e40"/></svg><div class="t" style="left:541.9px;top:761.0px;font-size:29.5px;color:#ffffff;letter-spacing:-0.557px;">Favorite</div><div style="position:absolute;left:465px;top:677px;width:481px;height:320px;border:10px solid #5a7a33;box-sizing:border-box"></div><div style="position:absolute;left:0px;top:1300px;width:2940px;height:154px;background:radial-gradient(ellipse 1500px 140px at 1470px 200px, rgba(0,0,0,0.2) 0%, rgba(0,0,0,0.13) 33%, rgba(0,0,0,0.05) 57%, rgba(0,0,0,0.01) 86%, rgba(0,0,0,0) 100%)"></div><svg style="position:absolute;left:0;top:1434px" width="24" height="20" viewBox="0 0 24 20"><path d="M0 4 A20 20 0 0 0 20 24 L0 24 Z" fill="#000"/></svg><svg style="position:absolute;left:2916px;top:1434px" width="24" height="20" viewBox="0 0 24 20"><path d="M24 4 A20 20 0 0 1 4 24 L24 24 Z" fill="#000"/></svg>
</body></html>
